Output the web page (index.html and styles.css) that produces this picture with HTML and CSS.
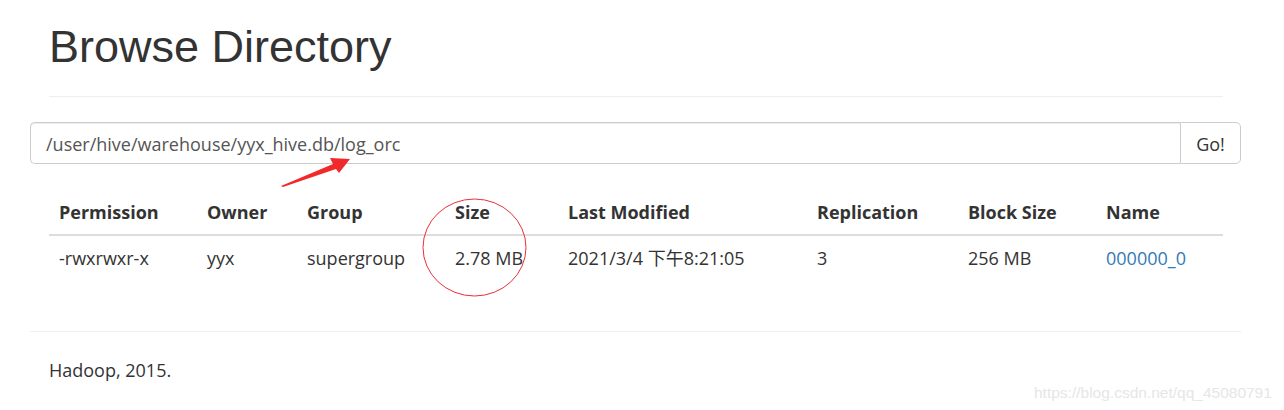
FILE: index.html
```html
<!DOCTYPE html>
<html>
<head>
<meta charset="utf-8">
<link rel="stylesheet" href="styles.css">
</head>
<body>
<div class="container">
  <div class="page-header">
    <h1 class="title">Browse Directory</h1>
  </div>
  <div class="input-group">
    <input class="path-input" type="text" value="/user/hive/warehouse/yyx_hive.db/log_orc">
    <button class="go-btn" type="button">Go!</button>
  </div>
  <div class="table-wrap">
    <table class="listing">
      <thead>
        <tr>
          <th class="c-perm">Permission</th>
          <th class="c-owner">Owner</th>
          <th class="c-group">Group</th>
          <th class="c-size">Size</th>
          <th class="c-mod">Last Modified</th>
          <th class="c-rep">Replication</th>
          <th class="c-block">Block Size</th>
          <th class="c-name">Name</th>
        </tr>
      </thead>
      <tbody>
        <tr>
          <td>-rwxrwxr-x</td>
          <td>yyx</td>
          <td>supergroup</td>
          <td>2.78 MB</td>
          <td>2021/3/4 下午8:21:05</td>
          <td>3</td>
          <td>256 MB</td>
          <td><a class="file-link" href="#">000000_0</a></td>
        </tr>
      </tbody>
    </table>
  </div>
  <hr class="footer-rule">
  <div class="footer">Hadoop, 2015.</div>
</div>
<svg class="annot" width="1284" height="410" viewBox="0 0 1284 410">
  <polygon points="281,186 333,164 330,158 350,159 339,173 336,169 283,187" fill="#f02a2a"/>
  <ellipse cx="474.5" cy="247.5" rx="51.5" ry="48.5" fill="none" stroke="#e8303a" stroke-width="1"/>
</svg>
<div class="watermark">https://blog.csdn.net/qq_45080791</div>
</body>
</html>
```
FILE: styles.css
```css
html, body {
  margin: 0;
  padding: 0;
  background: #fff;
}
body {
  font-family: "Open Sans", "Noto Sans CJK SC", sans-serif;
  font-size: 18px;
  color: #333;
  width: 1284px;
  height: 410px;
  overflow: hidden;
  position: relative;
}
.container {
  width: 1211px;
  margin-left: 30px;
}
.page-header {
  margin: 0 18px 0 19px;
  padding-top: 22px;
  padding-bottom: 24px;
  border-bottom: 1px solid #eee;
}
.title {
  margin: 0;
  font-family: "Liberation Sans", Arial, sans-serif;
  font-weight: 400;
  font-size: 45px;
  line-height: 50px;
  color: #333;
}
.input-group {
  display: flex;
  margin-top: 25px;
  height: 42px;
}
.path-input {
  flex: 1;
  box-sizing: border-box;
  height: 42px;
  border: 1px solid #ccc;
  border-right: none;
  border-radius: 5px 0 0 5px;
  padding: 1px 15px 0;
  font-family: "Open Sans", "Noto Sans CJK SC", sans-serif;
  font-size: 18px;
  color: #555;
  box-shadow: inset 0 1px 1px rgba(0,0,0,.075);
  outline: none;
}
.go-btn {
  box-sizing: border-box;
  width: 61px;
  height: 42px;
  border: 1px solid #ccc;
  border-radius: 0 5px 5px 0;
  background: #fff;
  font-family: "Open Sans", sans-serif;
  font-size: 18px;
  color: #333;
  padding: 1px 0 0;
}
.table-wrap {
  margin: 26px 18px 0 19px;
}
.listing {
  width: 100%;
  border-collapse: collapse;
  border-spacing: 0;
}
.listing th, .listing td {
  text-align: left;
  padding: 10px;
  line-height: 25px;
  white-space: nowrap;
}
.listing th {
  font-weight: 700;
  padding-bottom: 9px;
  border-bottom: 2px solid #ddd;
}
.c-perm { width: 128px; }
.c-owner { width: 80px; }
.c-group { width: 128px; }
.c-size { width: 93px; }
.c-mod { width: 229px; }
.c-rep { width: 131px; }
.c-block { width: 118px; }
.file-link {
  color: #337ab7;
  text-decoration: none;
}
.footer-rule {
  margin: 50px 0 0 0;
  border: 0;
  border-top: 1px solid #eee;
  height: 0;
}
.footer {
  padding: 26px 19px 0;
  line-height: 25px;
}
.annot {
  position: absolute;
  left: 0;
  top: 0;
  pointer-events: none;
}
.watermark {
  position: absolute;
  left: 1034px;
  top: 383px;
  font-family: "Liberation Sans", Arial, sans-serif;
  font-size: 15.5px;
  color: #e6e6e6;
  line-height: 20px;
}
```
